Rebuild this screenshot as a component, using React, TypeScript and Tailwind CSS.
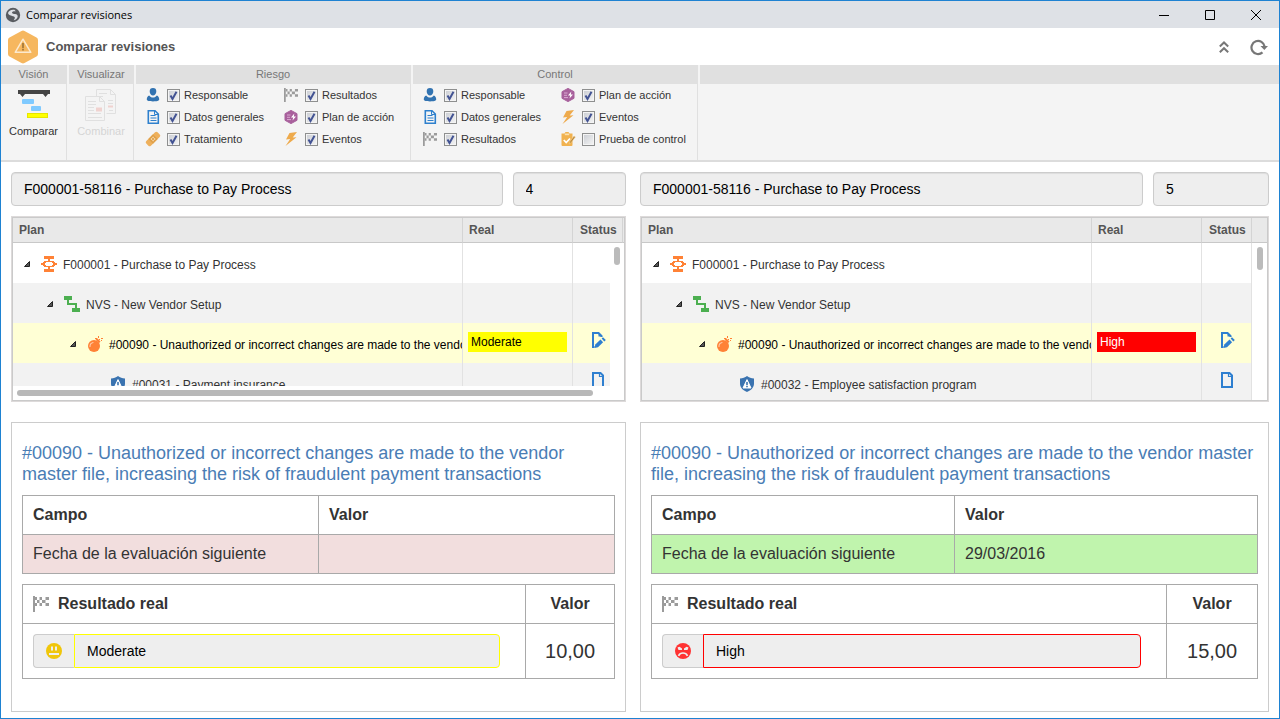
import type { ReactNode } from 'react';

/* ---------- Icons ---------- */

function GlobeIcon() {
  return (
    <svg viewBox="0 0 16 16" className="size-4 shrink-0" aria-hidden="true">
      <circle cx="8" cy="8" r="7.2" fill="#595c61" />
      <path d="M3 6C3.600 3.800 6 2.300 9.400 2.800L10.800 4.200C9 4 7.200 4.300 7 5.400c-.1 1 1.400 1.400 3 1.600 2 .3 3 1.300 2.600 3-.5 2-2.200 3-4 3.200 1-1 1.600-2.200 1-3.200C8.300 8.600 3.600 9 3 6Z" fill="#dee1e6" />
    </svg>
  );
}

function RiskHexIcon() {
  return (
    <svg viewBox="0 0 30 34" className="h-[34px] w-[30px] shrink-0" aria-hidden="true">
      <path d="M13.500.9a3 3 0 0 1 3 0l12 6.600a3 3 0 0 1 1.500 2.600v13.800a3 3 0 0 1-1.500 2.600l-12 6.600a3 3 0 0 1-3 0l-12-6.600A3 3 0 0 1 0 23.900V10.100a3 3 0 0 1 1.500-2.600Z" fill="#f6b75f" />
      <path d="M15 9.200 22.800 22.300H7.200Z" fill="none" stroke="#fbe9cf" strokeWidth="1.500" strokeLinejoin="round" />
      <path d="M15 13v5M15 18.800v1.700" stroke="#a57a3c" strokeWidth="1.800" />
    </svg>
  );
}

function CompareIcon() {
  return (
    <svg viewBox="0 0 32 32" className="size-8" aria-hidden="true">
      <path d="M0 1h32v4h-2l-2.500 3L25 5H7L4.500 8 2 5H0Z" fill="#444" />
      <rect x="4" y="10" width="12" height="5" rx="1" fill="#80caff" />
      <rect x="13" y="17" width="10" height="5" rx="1" fill="#80caff" />
      <rect x="9.500" y="24.500" width="20" height="4" fill="#ff0" stroke="#e6e600" />
    </svg>
  );
}

function CombineIcon() {
  return (
    <svg viewBox="0 0 32 32" className="size-8" fill="none" stroke="#e0e0e0" aria-hidden="true">
      <path d="M11.500 7V.5h14l5 5v19h-9M25.500.5v5h5" />
      <path d="M14 4.500h8M14 7.500h4M23 11.500h5M23 14.500h5M24 21.500h4" />
      <path d="M.5 7.500h14l5 5v19H.5ZM14.500 7.500v5h5" />
      <path d="M3 12.500h8M3 15.500h8M3 18.500h6M3 21.500h6M3 24.500h13M3 28.500h14" />
      <path d="M11 19.500h6M11 21.500h6M23 17.500h5" stroke="#f0d2cf" strokeWidth="2" />
    </svg>
  );
}

function PersonIcon() {
  return (
    <svg viewBox="0 0 16 16" className="size-4" fill="#3273b1" aria-hidden="true">
      <path d="M8 1a3.300 3.300 0 0 1 3.300 3.400C11.300 6.500 9.800 8.500 8 8.500S4.700 6.500 4.700 4.400A3.300 3.300 0 0 1 8 1Z" />
      <path d="M4.200 8.500C5 9.800 6.400 10.600 8 10.600s3-.8 3.800-2.100c1.500.6 2.400 2 2.400 4 0 1.300-2.700 1.900-6.200 1.900s-6.200-.6-6.200-1.900c0-2 .9-3.400 2.400-4Z" />
    </svg>
  );
}

function DataIcon() {
  return (
    <svg viewBox="0 0 16 16" className="size-4" fill="none" stroke="#2e80cd" strokeWidth="1.600" aria-hidden="true">
      <path d="M3.300 1.800h6.700L13.300 5v9.200h-10Z" />
      <path d="M9.500 2v3.500H13" strokeWidth="1" />
      <path d="M5.500 6.500h5M5.500 9h6M5.500 11.500h6" strokeWidth="1.200" />
    </svg>
  );
}

function BandageIcon() {
  return (
    <svg viewBox="0 0 16 16" className="size-4" aria-hidden="true">
      <g transform="rotate(-45 8 8)">
        <rect x="0" y="4.700" width="16" height="6.600" rx="1.800" fill="#eeb05c" />
        <rect x="4.700" y="4.700" width="6.600" height="6.600" fill="#dfa04a" />
        <path d="M6.300 6.300h1.300v1.300h-1.300ZM8.500 6.300h1.300v1.300h-1.300ZM6.300 8.500h1.300v1.300h-1.300ZM8.500 8.500h1.300v1.300h-1.300Z" fill="#fbe3bd" />
      </g>
    </svg>
  );
}

function FlagIcon({ className }: { className: string }) {
  return (
    <svg viewBox="0 0 16 16" className={className} fill="#9b9b9b" aria-hidden="true">
      <path d="M0 0h2v16H0Z" />
      <path d="M2 1h2v3H2ZM6.500 1H9v3H6.500ZM12.500 1H16v3h-3.500ZM4 4h2.500v3H4ZM9 4h3.500v3H9ZM2 7h2v3H2ZM6.500 7H9v3H6.500ZM12.500 7H16v3h-3.500Z" />
    </svg>
  );
}

function PlanIcon() {
  return (
    <svg viewBox="0 0 16 16" className="size-4" aria-hidden="true">
      <path d="m8 1.400 6 3.300v6.600l-6 3.300-6-3.300V4.700Z" fill="#a8609c" stroke="#a8609c" strokeLinejoin="round" />
      <path d="M4 6h3.500M4 8.300h3M4 10.600h4" stroke="#d9a9d1" />
      <path d="M11.300 4.500 8 8.500h2.200L9.500 11.500 13 7.500h-2.200Z" fill="#fff" />
    </svg>
  );
}

function BoltIcon() {
  return (
    <svg viewBox="0 0 16 16" className="size-4" fill="#eeaa4c" aria-hidden="true">
      <path d="M14 1 6.500 2 3 8.500l4.200-.4L2.500 15 13.500 6.300l-3.800.2Z" />
    </svg>
  );
}

function ClipboardIcon() {
  return (
    <svg viewBox="0 0 16 16" className="size-4" aria-hidden="true">
      <path d="M1.500 2.500h3L5.500 1h3l1 1.500h3V14a1 1 0 0 1-1 1h-9a1 1 0 0 1-1-1Z" fill="#f1b24f" />
      <path d="M4.800 2.500h4.400v1.700H4.800Z" fill="#fbe0ae" />
      <path d="m3.800 9 2.400 2.500L10 7.500" fill="none" stroke="#fff" strokeWidth="1.800" />
      <path d="M14 5 9.800 10.800l-.6 2.200 2-1.400L15.400 6Z" fill="#b98636" stroke="#f6d9a5" strokeWidth=".5" />
    </svg>
  );
}

function ProcessIcon() {
  return (
    <svg viewBox="0 0 16 16" className="size-4 shrink-0" fill="#ff8236" shapeRendering="crispEdges" aria-hidden="true">
      <path d="M3 0h10v3H9v2h4v2h3v2h-3v2H9v2h4v3H3v-3h4v-2H3V9H0V7h3V5h4V3H3ZM5 6v1H4v2h1v1h6V9h1V7h-1V6Z" fillRule="evenodd" />
      <path d="M2 6h1v4H2ZM13 6h1v4h-1Z" />
    </svg>
  );
}

function ActivityIcon() {
  return (
    <svg viewBox="0 0 16 16" className="size-4 shrink-0" fill="#4caf50" shapeRendering="crispEdges" aria-hidden="true">
      <path d="M0 0h8v4H5v3h8v5h3v4H8v-4h3V9H3V4H0Z" />
    </svg>
  );
}

function BombIcon() {
  return (
    <svg viewBox="0 0 16 16" className="size-4 shrink-0" aria-hidden="true">
      <circle cx="7" cy="10" r="6" fill="#ff8236" />
      <path d="m8.500 3.600 1.800-1.400 3.200 3.200-1.500 1.800Z" fill="#ff8236" />
      <path d="M3 10.500A4 4 0 0 1 6 6.500" fill="none" stroke="#ffc9a5" strokeWidth="1.200" strokeLinecap="round" />
      <path d="M8 2h2v1H8ZM11 0h1v2h-1ZM14 2h2v1h-2ZM12 3h1v1h-1ZM14 4h1v1h-1Z" fill="#ff8236" />
    </svg>
  );
}

function ShieldIcon() {
  return (
    <svg viewBox="0 0 16 16" className="size-4 shrink-0" aria-hidden="true">
      <path d="M8 0c2 1.600 4.200 2.400 7 2.600v5c0 4-3 7-7 8.400-4-1.400-7-4.400-7-8.400v-5C3.800 2.400 6 1.600 8 0Z" fill="#3a73b0" />
      <path d="m8 3.600 4 8.400H4Z" fill="#fff" stroke="#fff" strokeLinejoin="round" />
      <path d="M8 6v3M8 9.800v1.400" stroke="#3a73b0" strokeWidth="1.600" />
    </svg>
  );
}

function PageIcon() {
  return (
    <svg viewBox="0 0 16 16" className="size-4" fill="none" stroke="#2e7fd0" strokeWidth="2" aria-hidden="true">
      <path d="M3 1h7.500L13 3.500V15H3Z" />
      <path d="M9.500 1v3.500H13" strokeWidth="1.200" />
    </svg>
  );
}

function PageEditIcon() {
  return (
    <svg viewBox="0 0 16 16" className="size-4" aria-hidden="true">
      <path d="M11.500 5V4L8.500 1H3v14h1.500" fill="none" stroke="#2e7fd0" strokeWidth="2" />
      <path d="M8.500 0 12.500 4.500h-4Z" fill="#2e7fd0" />
      <path d="m4.500 16 .8-3.600 5.200-4.800 2.600 2.600L8 15.200Z" fill="#2e7fd0" />
      <path d="m11.600 6.600 1.400-1.300L15.800 8l-1.500 1.400Z" fill="#2e7fd0" />
    </svg>
  );
}

function NeutralFace() {
  return (
    <svg viewBox="0 0 16 16" className="size-4" aria-hidden="true">
      <circle cx="8" cy="8" r="8" fill="#f0c60a" />
      <path d="M5 3.500h2v4H5ZM9 3.500h2v4H9ZM3 10h10v2H3Z" fill="#eee" />
    </svg>
  );
}

function AngryFace() {
  return (
    <svg viewBox="0 0 16 16" className="size-4" aria-hidden="true">
      <circle cx="8" cy="8" r="8" fill="#ff3333" />
      <path d="m2.500 4.500 2-.8L7 5.500V7H3.500ZM13.500 4.500l-2-.8L9 5.500V7h3.500Z" fill="#eee" />
      <path d="M3.500 12.800c1-2 2.500-2.800 4.500-2.800s3.500.8 4.500 2.800" fill="none" stroke="#eee" strokeWidth="1.700" />
    </svg>
  );
}

function Expander() {
  return (
    <svg viewBox="0 0 6 6" className="size-[6px]" aria-hidden="true">
      <path d="M5.500.5v5H.5Z" fill="#555" stroke="#222" strokeLinejoin="round" />
    </svg>
  );
}

/* ---------- Ribbon ---------- */

type Option = { label: string; icon: ReactNode; checked?: boolean };

const smallFlag = <FlagIcon className="mx-px size-[14px]" />;

const riskOptions: Option[] = [
  { label: 'Responsable', icon: <PersonIcon />, checked: true },
  { label: 'Datos generales', icon: <DataIcon />, checked: true },
  { label: 'Tratamiento', icon: <BandageIcon />, checked: true },
  { label: 'Resultados', icon: smallFlag, checked: true },
  { label: 'Plan de acción', icon: <PlanIcon />, checked: true },
  { label: 'Eventos', icon: <BoltIcon />, checked: true },
];

const controlOptions: Option[] = [
  { label: 'Responsable', icon: <PersonIcon />, checked: true },
  { label: 'Datos generales', icon: <DataIcon />, checked: true },
  { label: 'Resultados', icon: smallFlag, checked: true },
  { label: 'Plan de acción', icon: <PlanIcon />, checked: true },
  { label: 'Eventos', icon: <BoltIcon />, checked: true },
  { label: 'Prueba de control', icon: <ClipboardIcon /> },
];

function RibbonGroup({ title, className, children }: { title?: string; className: string; children?: ReactNode }) {
  return (
    <section className={`flex flex-col ${className}`}>
      <h2 className="h-[19px] bg-[#e0e0e0] text-center leading-[19px] text-[#777]">{title}</h2>
      <div className="flex-1">{children}</div>
    </section>
  );
}

function OptionGrid({ options }: { options: Option[] }) {
  return (
    <div className="grid grid-flow-col grid-cols-[138px_1fr] grid-rows-[22px_22px_22px] pl-[9px]">
      {options.map((o) => (
        <label key={o.label} className="flex items-center whitespace-nowrap">
          {o.icon}
          <span className="ml-[6px] mr-1 grid size-[13px] place-items-center">
            <input
              type="checkbox"
              defaultChecked={o.checked}
              className="peer col-start-1 row-start-1 size-[13px] appearance-none border border-[#8e8f8f] bg-linear-to-br from-[#c9ccd2] to-[#f6f6f6] shadow-[inset_0_0_0_1px_#f4f4f4]"
            />
            <svg viewBox="0 0 13 13" className="pointer-events-none invisible col-start-1 row-start-1 size-[13px] peer-checked:visible" aria-hidden="true">
              <path d="m3.500 6.500 2 3.500L9.500 2.800" fill="none" stroke="#435393" strokeWidth="2" />
            </svg>
          </span>
          {o.label}
        </label>
      ))}
    </div>
  );
}

/* ---------- Revision pane ---------- */

type Revision = {
  id: string;
  number: string;
  real: string;
  realClass: string;
  child: string;
  rowClass: string;
  date: string;
  face: ReactNode;
  resultClass: string;
  value: string;
  wideScroll: boolean;
};

const revisions: Revision[] = [
  {
    id: 'left',
    number: '4',
    real: 'Moderate',
    realClass: 'bg-[#ffff00] text-black',
    child: '#00031 - Payment insurance',
    rowClass: 'bg-[#f2dede]',
    date: '',
    face: <NeutralFace />,
    resultClass: 'border-[#ffff00]',
    value: '10,00',
    wideScroll: true,
  },
  {
    id: 'right',
    number: '5',
    real: 'High',
    realClass: 'bg-[#ff0000] text-white',
    child: '#00032 - Employee satisfaction program',
    rowClass: 'bg-[#c0f4ad]',
    date: '29/03/2016',
    face: <AngryFace />,
    resultClass: 'border-[#ff0000]',
    value: '15,00',
    wideScroll: false,
  },
];

const riskName = '#00090 - Unauthorized or incorrect changes are made to the vendor master file, increasing the risk of fraudulent payment transactions';

function TreeCell({ indent, icon, leaf, children }: { indent: string; icon: ReactNode; leaf?: boolean; children: ReactNode }) {
  return (
    <td className="overflow-hidden border-r border-[#e2e2e2] p-0">
      <div className={`flex h-10 items-center overflow-hidden whitespace-nowrap pt-[2px] ${indent}`}>
        {leaf ? (
          <span className="w-[17px] shrink-0" />
        ) : (
          <button type="button" aria-label="Contraer" className="flex h-4 w-[17px] shrink-0 items-center">
            <Expander />
          </button>
        )}
        {icon}
        <span className="ml-[6px] pt-[2px]">{children}</span>
      </div>
    </td>
  );
}

const blankCell = 'border-r border-[#e2e2e2] p-0';

function PlanTree({ rev }: { rev: Revision }) {
  const iconCell = `${blankCell} pt-[9px] align-top`;
  const filler = 'bg-white p-0';
  const head = 'border-r border-[#d4d4d4] p-0 pl-[6px] text-left font-bold';
  return (
    <div className="h-[186px] border border-[#dddada]">
      <div className="relative h-full overflow-hidden border border-[#cacaca]">
        <table className="w-full table-fixed border-separate border-spacing-0 text-xs text-[#333]">
          <colgroup>
            <col />
            <col className="w-[110px]" />
            <col className="w-[50px]" />
            <col className={rev.wideScroll ? 'w-px' : 'w-[15px]'} />
          </colgroup>
          <thead>
            <tr className="h-[25px] bg-[#e9e9e9] text-[#555] [&>th]:border-b [&>th]:border-b-[#c8c8c8]">
              <th className={head}>Plan</th>
              <th className={head}>Real</th>
              <th className="border-r border-[#d4d4d4] p-0 pl-[7px] text-left font-bold">Status</th>
              <th className="p-0" />
            </tr>
          </thead>
          <tbody>
            <tr className="h-10 bg-white">
              <TreeCell indent="pl-[11px]" icon={<ProcessIcon />}>F000001 - Purchase to Pay Process</TreeCell>
              <td className={blankCell} />
              <td className={blankCell} />
              <td className={filler} />
            </tr>
            <tr className="h-10 bg-[#f2f2f2]">
              <TreeCell indent="pl-[34px]" icon={<ActivityIcon />}>NVS - New Vendor Setup</TreeCell>
              <td className={blankCell} />
              <td className={blankCell} />
              <td className={filler} />
            </tr>
            <tr className="h-10 bg-[#ffffd5] text-black">
              <TreeCell indent="pl-[57px]" icon={<BombIcon />}>{riskName}</TreeCell>
              <td className={`${iconCell} pl-[5px] pr-[5px]`}>
                <div className={`h-5 px-[3px] leading-5 ${rev.realClass}`}>{rev.real}</div>
              </td>
              <td className={iconCell}>
                <div className="flex justify-center"><PageEditIcon /></div>
              </td>
              <td className={filler} />
            </tr>
            <tr className="h-10 bg-[#f2f2f2]">
              <TreeCell indent="pl-[80px]" icon={<ShieldIcon />} leaf>{rev.child}</TreeCell>
              <td className={blankCell} />
              <td className={iconCell}>
                <div className="flex justify-center"><PageIcon /></div>
              </td>
              <td className={filler} />
            </tr>
          </tbody>
        </table>
        {rev.wideScroll ? (
          <>
            <div className="absolute bottom-0 right-0 top-[25px] w-[14px] bg-white pl-1 pt-1">
              <div className="h-[18px] w-[6px] rounded-full bg-[#bbb]" />
            </div>
            <div className="absolute inset-x-0 bottom-0 h-[14px] bg-white pl-1 pr-[31px] pt-1">
              <div className="h-[6px] rounded-full bg-[#b8b8b8]" />
            </div>
          </>
        ) : (
          <div className="absolute right-1 top-[29px] h-[23px] w-[6px] rounded-full bg-[#bbb]" />
        )}
      </div>
    </div>
  );
}

const field = 'h-[34px] w-full min-w-0 rounded border border-[#ccc] bg-[#eee] px-3 text-sm text-black shadow-[inset_0_1px_1px_rgba(0,0,0,0.075)] outline-none';
const box = 'border border-[#a9a9a9]';

function Details({ rev }: { rev: Revision }) {
  return (
    <article className="flex-1 border border-[#ccc] px-[10px] pb-8 pt-5 text-base leading-[22px] text-[#333]">
      <h3 className="text-lg leading-[21px] text-[#4a7db5]">{riskName}</h3>
      <table className="mt-[10px] w-full table-fixed border-collapse">
        <thead>
          <tr className="h-[39px]">
            <th className={`${box} px-[10px] text-left font-bold`}>Campo</th>
            <th className={`${box} px-[10px] text-left font-bold`}>Valor</th>
          </tr>
        </thead>
        <tbody>
          <tr className={`h-[39px] ${rev.rowClass}`}>
            <td className={`${box} px-[10px]`}>Fecha de la evaluación siguiente</td>
            <td className={`${box} px-[10px]`}>{rev.date}</td>
          </tr>
        </tbody>
      </table>
      <table className="mt-[10px] w-full table-fixed border-collapse">
        <thead>
          <tr className="h-[39px]">
            <th className={`${box} w-[85%] px-[10px] text-left font-bold`}>
              <div className="flex items-center gap-[9px]">
                <FlagIcon className="size-4" />
                Resultado real
              </div>
            </th>
            <th className={`${box} text-center font-bold`}>Valor</th>
          </tr>
        </thead>
        <tbody>
          <tr className="h-[55px]">
            <td className={`${box} pl-[10px] pr-[25px]`}>
              <div className="flex">
                <span className="flex h-[34px] w-[41px] shrink-0 items-center justify-center rounded-l border border-r-0 border-[#ccc] bg-[#eee]">
                  {rev.face}
                </span>
                <input
                  readOnly
                  aria-label="Resultado real"
                  defaultValue={rev.real}
                  className={`h-[34px] w-full min-w-0 rounded-r border bg-[#eee] px-3 text-sm text-black outline-none ${rev.resultClass}`}
                />
              </div>
            </td>
            <td className={`${box} text-center text-xl leading-[22px]`}>{rev.value}</td>
          </tr>
        </tbody>
      </table>
    </article>
  );
}

/* ---------- Window ---------- */

const winButton = 'flex h-full w-[46px] items-center justify-center';

export default function App() {
  return (
    <div className="flex min-h-screen flex-col border border-[#1e82d2] bg-white font-['Liberation_Sans',Arial,sans-serif]">
      <div className="flex h-[27px] items-center bg-[#dee1e6] pl-1">
        <GlobeIcon />
        <span className="ml-[5px] flex-1 pt-px font-['Open_Sans',sans-serif] text-[11px] text-black">Comparar revisiones</span>
        <button type="button" aria-label="Minimizar" className={winButton}>
          <svg viewBox="0 0 10 10" className="size-[10px]"><path d="M0 5.500h10" stroke="#000" /></svg>
        </button>
        <button type="button" aria-label="Maximizar" className={winButton}>
          <svg viewBox="0 0 10 10" className="size-[10px]"><path d="M.5.5h9v9h-9Z" fill="none" stroke="#000" /></svg>
        </button>
        <button type="button" aria-label="Cerrar" className={winButton}>
          <svg viewBox="0 0 10 10" className="size-[10px]"><path d="m0 0 10 10M10 0 0 10" stroke="#000" /></svg>
        </button>
      </div>

      <header className="flex h-[37px] items-center pl-[7px] pr-[11px]">
        <RiskHexIcon />
        <h1 className="ml-2 flex-1 text-[13px] font-bold text-[#555]">Comparar revisiones</h1>
        <button type="button" aria-label="Contraer cinta" className="mr-[21px]">
          <svg viewBox="0 0 10 12" className="h-3 w-[10px]" fill="none" stroke="#777" strokeWidth="2" aria-hidden="true">
            <path d="m.8 5.500 4.200-4 4.200 4M.8 11.200l4.200-4 4.200 4" />
          </svg>
        </button>
        <button type="button" aria-label="Actualizar">
          <svg viewBox="0 0 18 18" className="size-[18px]" aria-hidden="true">
            <path d="M12.500 14.400A6.600 6.600 0 1 1 14.600 8.500" fill="none" stroke="#777" strokeWidth="2.200" />
            <path d="M10.500 8h7.500l-3.700 4Z" fill="#777" />
          </svg>
        </button>
      </header>

      <nav className="flex h-[97px] gap-[2px] border-b-2 border-[#dcdcdc] bg-[#f4f4f4] text-[11px] text-[#333]" aria-label="Opciones">
        <RibbonGroup title="Visión" className="w-[66px] border-r border-[#e0e0e0]">
          <button type="button" className="flex w-full flex-col items-center pt-[5px]">
            <CompareIcon />
            <span className="mt-[2px]">Comparar</span>
          </button>
        </RibbonGroup>
        <RibbonGroup title="Visualizar" className="w-[65px] border-r border-[#e0e0e0]">
          <button type="button" disabled className="flex w-full flex-col items-center pt-[5px] text-[#d4d4d4]">
            <CombineIcon />
            <span className="mt-[2px]">Combinar</span>
          </button>
        </RibbonGroup>
        <RibbonGroup title="Riesgo" className="w-[275px] border-r border-[#e0e0e0]">
          <OptionGrid options={riskOptions} />
        </RibbonGroup>
        <RibbonGroup title="Control" className="w-[285px] border-r border-[#e0e0e0]">
          <OptionGrid options={controlOptions} />
        </RibbonGroup>
        <RibbonGroup className="flex-1" />
      </nav>

      <main className="grid flex-1 grid-cols-[615fr_629fr] gap-[14px] px-[10px] pb-[6px] pt-[10px]">
        {revisions.map((rev) => (
          <section key={rev.id} className="flex min-w-0 flex-col">
            <div className="mb-[10px] grid grid-cols-[13fr_3fr] gap-[10px]">
              <input readOnly aria-label="Proceso" defaultValue="F000001-58116 - Purchase to Pay Process" className={field} />
              <input readOnly aria-label="Revisión" defaultValue={rev.number} className={field} />
            </div>
            <div className="mb-5">
              <PlanTree rev={rev} />
            </div>
            <Details rev={rev} />
          </section>
        ))}
      </main>
    </div>
  );
}
